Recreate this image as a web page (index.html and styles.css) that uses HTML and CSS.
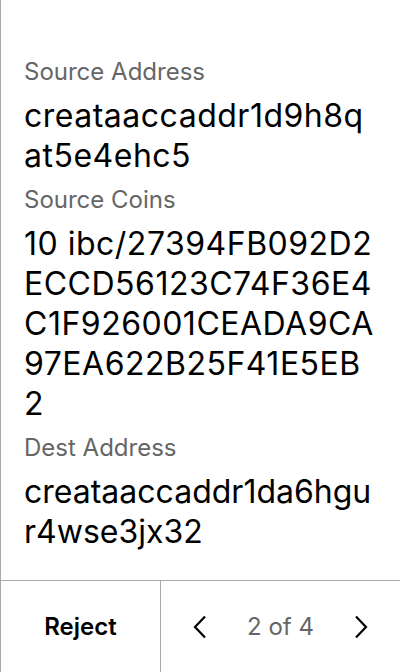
FILE: index.html
```html
<!DOCTYPE html>
<html>
<head>
<meta charset="utf-8">
<link rel="stylesheet" href="styles.css">
</head>
<body>
<div class="screen">
  <div class="content">
    <div class="field">
      <div class="label">Source Address</div>
      <div class="value">creataaccaddr1d9h8qat5e4ehc5</div>
    </div>
    <div class="field">
      <div class="label">Source Coins</div>
      <div class="value">10 ibc/27394FB092D2ECCD56123C74F36E4C1F926001CEADA9CA97EA622B25F41E5EB2</div>
    </div>
    <div class="field">
      <div class="label">Dest Address</div>
      <div class="value tight">creataaccaddr1da6hgur4wse3jx32</div>
    </div>
  </div>
  <div class="footer">
    <div class="reject">Reject</div>
    <div class="pager">
      <svg class="chev" viewBox="0 0 16 24" width="16" height="24"><path d="M13 1.5 L3 12 L13 22.5" fill="none" stroke="#000" stroke-width="2.2"/></svg>
      <span class="count">2 of 4</span>
      <svg class="chev" viewBox="0 0 16 24" width="16" height="24"><path d="M3 1.5 L13 12 L3 22.5" fill="none" stroke="#000" stroke-width="2.2"/></svg>
    </div>
  </div>
</div>
</body>
</html>
```
FILE: styles.css
```css
html, body {
  margin: 0;
  padding: 0;
  background: #fff;
}
body {
  font-family: Inter, "Liberation Sans", sans-serif;
}
.screen {
  height: 672px;
  display: flex;
  flex-direction: column;
  border-left: 1px solid #a8a8a8;
  box-sizing: border-box;
}
.content {
  flex: 1;
  padding: 48px 23px 0 23px;
}
.field {
  padding-top: 8px;
}
.label {
  font-size: 24px;
  line-height: 32px;
  color: #666;
}
.value {
  margin-top: 8px;
  font-size: 32px;
  line-height: 40px;
  letter-spacing: 0.5px;
  color: #000;
  word-break: break-all;
}
.value.tight {
  letter-spacing: 0;
}
.footer {
  height: 91px;
  border-top: 1px solid #a8a8a8;
  display: flex;
}
.reject {
  width: 159px;
  border-right: 1px solid #a8a8a8;
  display: flex;
  align-items: center;
  justify-content: center;
  font-size: 24px;
  font-weight: 600;
  color: #000;
}
.pager {
  flex: 1;
  display: flex;
  align-items: center;
  justify-content: space-between;
  padding: 0 31px 0 31px;
}
.count {
  font-size: 24px;
  color: #666;
}
.chev {
  display: block;
}
```
